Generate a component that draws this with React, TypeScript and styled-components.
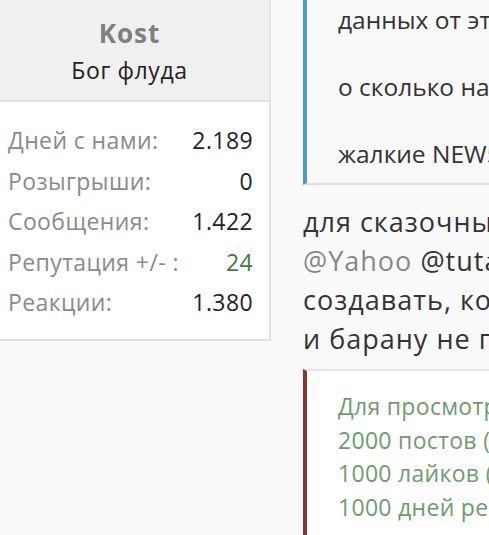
import React from "react";
import styled, { createGlobalStyle } from "styled-components";

const GlobalStyle = createGlobalStyle`
  html, body {
    margin: 0;
    padding: 0;
    background: #fafafa;
    font-family: "Open Sans", "Liberation Sans", sans-serif;
    overflow: hidden;
  }
`;

const Page = styled.div`
  display: flex;
  align-items: flex-start;
  gap: 32px;
  height: 535px;
  overflow: hidden;
`;

const UserCard = styled.aside`
  flex: 0 0 281px;
  box-sizing: border-box;
  margin-left: -10px;
  background: #fff;
  border-right: 2px solid #e2e2e2;
  border-bottom: 2px solid #e2e2e2;
`;

const CardHead = styled.div`
  height: 102px;
  background: #f0f0f0;
  border-bottom: 2px solid #e2e2e2;
  display: flex;
  flex-direction: column;
  align-items: center;
  justify-content: center;
  padding-top: 2px;
  box-sizing: border-box;
`;

const UserName = styled.h3`
  margin: 0;
  font-size: 26px;
  font-weight: 700;
  letter-spacing: 1px;
  line-height: 34px;
  color: #7f7f7f;
`;

const UserTitle = styled.div`
  margin-top: 4px;
  font-size: 23px;
  letter-spacing: 0.6px;
  line-height: 32px;
  color: #222;
`;

const Stats = styled.dl`
  margin: 0;
  padding: 18px 16px 16px 18px;
`;

const StatRow = styled.div`
  display: flex;
  justify-content: space-between;
  font-size: 23px;
  letter-spacing: 0.4px;
  line-height: 40.5px;
`;

const StatLabel = styled.dt`
  color: #8a8a8a;
`;

const StatValue = styled.dd<{ $accent?: boolean }>`
  margin: 0;
  color: ${(p) => (p.$accent ? "#3f7d3f" : "#222")};
`;

const Thread = styled.main`
  flex: 1;
  min-width: 0;
  overflow: hidden;
`;

const Quote = styled.blockquote<{ $bar: string }>`
  margin: 0;
  background: #f9f9f9;
  border-left: 4px solid ${(p) => p.$bar};
  padding-left: 31px;
  white-space: nowrap;
  overflow: hidden;
`;

const QuoteTop = styled(Quote)`
  margin-top: -12px;
  padding-top: 15px;
  padding-bottom: 12px;
  border-bottom: 2px solid #dedede;
`;

const QuoteLine = styled.p`
  margin: 0 0 33px;
  font-size: 24.5px;
  line-height: 34px;
  color: #333;
  &:last-child {
    margin-bottom: 0;
  }
`;

const Body = styled.p`
  margin: 17px 0 0;
  font-size: 27px;
  letter-spacing: 1px;
  line-height: 39px;
  color: #333;
  white-space: nowrap;
`;

const Mention = styled.span<{ $muted?: boolean }>`
  color: ${(p) => (p.$muted ? "#888" : "#333")};
`;

const HiddenBox = styled(Quote)`
  margin-top: 11px;
  background: #fff;
  border-top: 2px solid #e4e4e4;
  padding-top: 19px;
  height: 200px;
`;

const HiddenLine = styled.div`
  font-size: 23px;
  letter-spacing: 0.3px;
  line-height: 33.5px;
  color: #6c9d6c;
`;

const stats = [
  { label: "Дней с нами:", value: "2.189" },
  { label: "Розыгрыши:", value: "0" },
  { label: "Сообщения:", value: "1.422" },
  { label: "Репутация +/- :", value: "24", accent: true },
  { label: "Реакции:", value: "1.380" },
];

export default function App() {
  return (
    <>
      <GlobalStyle />
      <Page>
        <UserCard>
          <CardHead>
            <UserName>Kost</UserName>
            <UserTitle>Бог флуда</UserTitle>
          </CardHead>
          <Stats>
            {stats.map((s) => (
              <StatRow key={s.label}>
                <StatLabel>{s.label}</StatLabel>
                <StatValue $accent={s.accent}>{s.value}</StatValue>
              </StatRow>
            ))}
          </Stats>
        </UserCard>

        <Thread>
          <QuoteTop $bar="#4a9bcf">
            <QuoteLine>данных от этого сервиса</QuoteLine>
            <QuoteLine>о сколько нам открытий</QuoteLine>
            <QuoteLine>жалкие NEW5 аккаунты</QuoteLine>
          </QuoteTop>

          <Body>
            для сказочных идиотов
            <br />
            <Mention $muted>@Yahoo</Mention> <Mention>@tutanota</Mention>
            <br />
            создавать, которые
            <br />
            и барану не понятно
          </Body>

          <HiddenBox $bar="#8e3434">
            <HiddenLine>Для просмотра скрытого текста</HiddenLine>
            <HiddenLine>2000 постов (сообщений)</HiddenLine>
            <HiddenLine>1000 лайков (реакций)</HiddenLine>
            <HiddenLine>1000 дней регистрации</HiddenLine>
          </HiddenBox>
        </Thread>
      </Page>
    </>
  );
}
